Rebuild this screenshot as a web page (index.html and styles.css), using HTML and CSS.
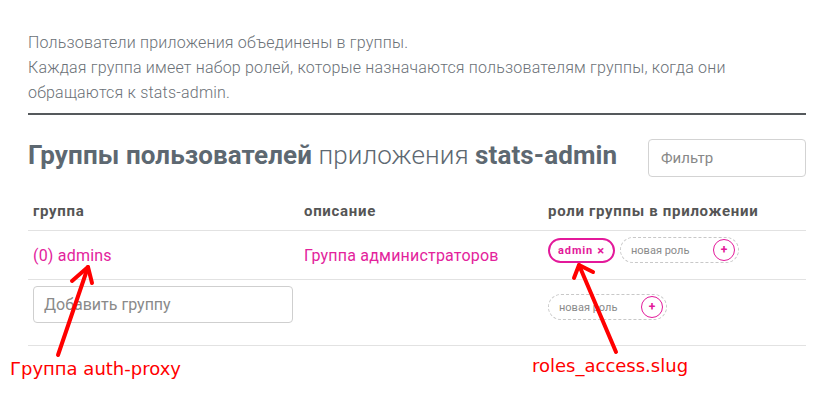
FILE: index.html
```html
<!DOCTYPE html>
<html lang="ru">
<head>
<meta charset="utf-8">
<link rel="stylesheet" href="styles.css">
</head>
<body>
<div class="page">
  <p class="intro">Пользователи приложения объединены в группы.<br>Каждая группа имеет набор ролей, которые назначаются пользователям группы, когда они обращаются к stats-admin.</p>
  <hr class="rule">
  <div class="head">
    <h1 class="title"><b>Группы пользователей</b> приложения <b>stats-admin</b></h1>
    <div class="filter">Фильтр</div>
  </div>
  <div class="table">
    <div class="row hrow">
      <div class="c1">группа</div>
      <div class="c2">описание</div>
      <div class="c3">роли группы в приложении</div>
    </div>
    <div class="row r1">
      <div class="c1 link">(0) admins</div>
      <div class="c2 link">Группа администраторов</div>
      <div class="c3 roles">
        <span class="chip">admin <span class="x">×</span></span>
        <span class="newrole"><span class="ph">новая роль</span><span class="plus">+</span></span>
      </div>
    </div>
    <div class="row r2">
      <div class="c1"><div class="addgroup">Добавить группу</div></div>
      <div class="c2"></div>
      <div class="c3 roles r2roles">
        <span class="newrole"><span class="ph">новая роль</span><span class="plus">+</span></span>
      </div>
    </div>
  </div>
  <div class="note note1">Группа auth-proxy</div>
  <div class="note note2">roles_access.slug</div>
  <svg class="arrows" width="831" height="406" viewBox="0 0 831 406">
    <g stroke="#ff0000" stroke-width="4" fill="none" stroke-linecap="round" stroke-linejoin="round">
      <path d="M58 355 L88 267"/>
      <path d="M72 281 L88 267 L92 283"/>
      <path d="M616 352 L579 265"/>
      <path d="M574 278 L579 265 L593 272"/>
    </g>
  </svg>
</div>
</body>
</html>
```
FILE: styles.css
```css
* { box-sizing: border-box; }
body {
  margin: 0;
  background: #fff;
  font-family: Roboto, "Noto Sans", sans-serif;
}
.page {
  position: relative;
  width: 831px;
  height: 406px;
  padding: 30px 25px 0 28px;
}
.intro {
  margin: 0;
  font-size: 16px;
  line-height: 25px;
  font-weight: 300;
  letter-spacing: 0.2px;
  color: #6b7177;
}
.rule {
  margin: 8px 0 0;
  border: 0;
  border-top: 2px solid #55595c;
  height: 0;
}
.head {
  display: flex;
  align-items: center;
  justify-content: space-between;
  margin-top: 23px;
  height: 40px;
}
.title {
  margin: 0 0 6px;
  font-size: 26px;
  font-weight: 300;
  color: #5d6871;
  letter-spacing: 0.1px;
}
.title b { font-weight: 700; }
.filter {
  width: 158px;
  height: 38px;
  border: 1px solid #d3d3d3;
  border-radius: 4px;
  padding: 0 12px;
  display: flex;
  align-items: center;
  font-size: 15px;
  color: #888;
}
.table { margin-top: 24px; }
.row {
  display: flex;
  border-bottom: 1px solid #e2e2e2;
}
.c1 { width: 271px; padding-left: 5px; }
.c2 { width: 244px; padding-left: 5px; }
.c3 { flex: 1; padding-left: 5px; }
.hrow {
  height: 29px;
  font-size: 15px;
  font-weight: 700;
  color: #555;
  letter-spacing: 0.7px;
}
.r1 { height: 49px; }
.r1 .link {
  padding-top: 14px;
  font-size: 16px;
  color: #e3239c;
  line-height: 22px;
  letter-spacing: 0.2px;
}
.roles {
  display: flex;
  align-items: flex-start;
  gap: 5px;
  padding-top: 6px;
}
.chip {
  display: inline-flex;
  align-items: center;
  height: 25px;
  margin-top: 1px;
  padding: 0 8px 0 8px;
  border: 2px solid #e3199a;
  border-radius: 13px;
  font-size: 11px;
  font-weight: 700;
  letter-spacing: 0.9px;
  color: #e3199a;
}
.chip .x { margin-left: 4px; font-size: 13px; font-weight: 700; }
.newrole {
  display: inline-flex;
  align-items: center;
  justify-content: space-between;
  width: 119px;
  height: 26px;
  border: 1px dashed #c8c8c8;
  border-radius: 13px;
  padding: 0 3px 0 10px;
  font-size: 11px;
  color: #8a8a8a;
}
.plus {
  width: 22px;
  height: 22px;
  border: 1.5px solid #e3199a;
  border-radius: 50%;
  color: #e3199a;
  font-size: 12px;
  font-weight: 700;
  display: flex;
  align-items: center;
  justify-content: center;
  line-height: 1;
}
.r2 { height: 66px; }
.r2 .c1 { padding-top: 6px; }
.addgroup {
  width: 260px;
  height: 37px;
  border: 1px solid #cfcfcf;
  border-radius: 4px;
  padding: 0 10px;
  display: flex;
  align-items: center;
  font-size: 16px;
  color: #8a8a8a;
}
.r2roles { padding-top: 14px; }
.note {
  position: absolute;
  font-family: "DejaVu Sans", sans-serif;
  font-size: 18px;
  color: #ff0000;
  line-height: 20px;
}
.note1 { left: 10px; top: 359px; }
.note2 { left: 532px; top: 356px; }
.arrows { position: absolute; left: 0; top: 0; pointer-events: none; }
```
